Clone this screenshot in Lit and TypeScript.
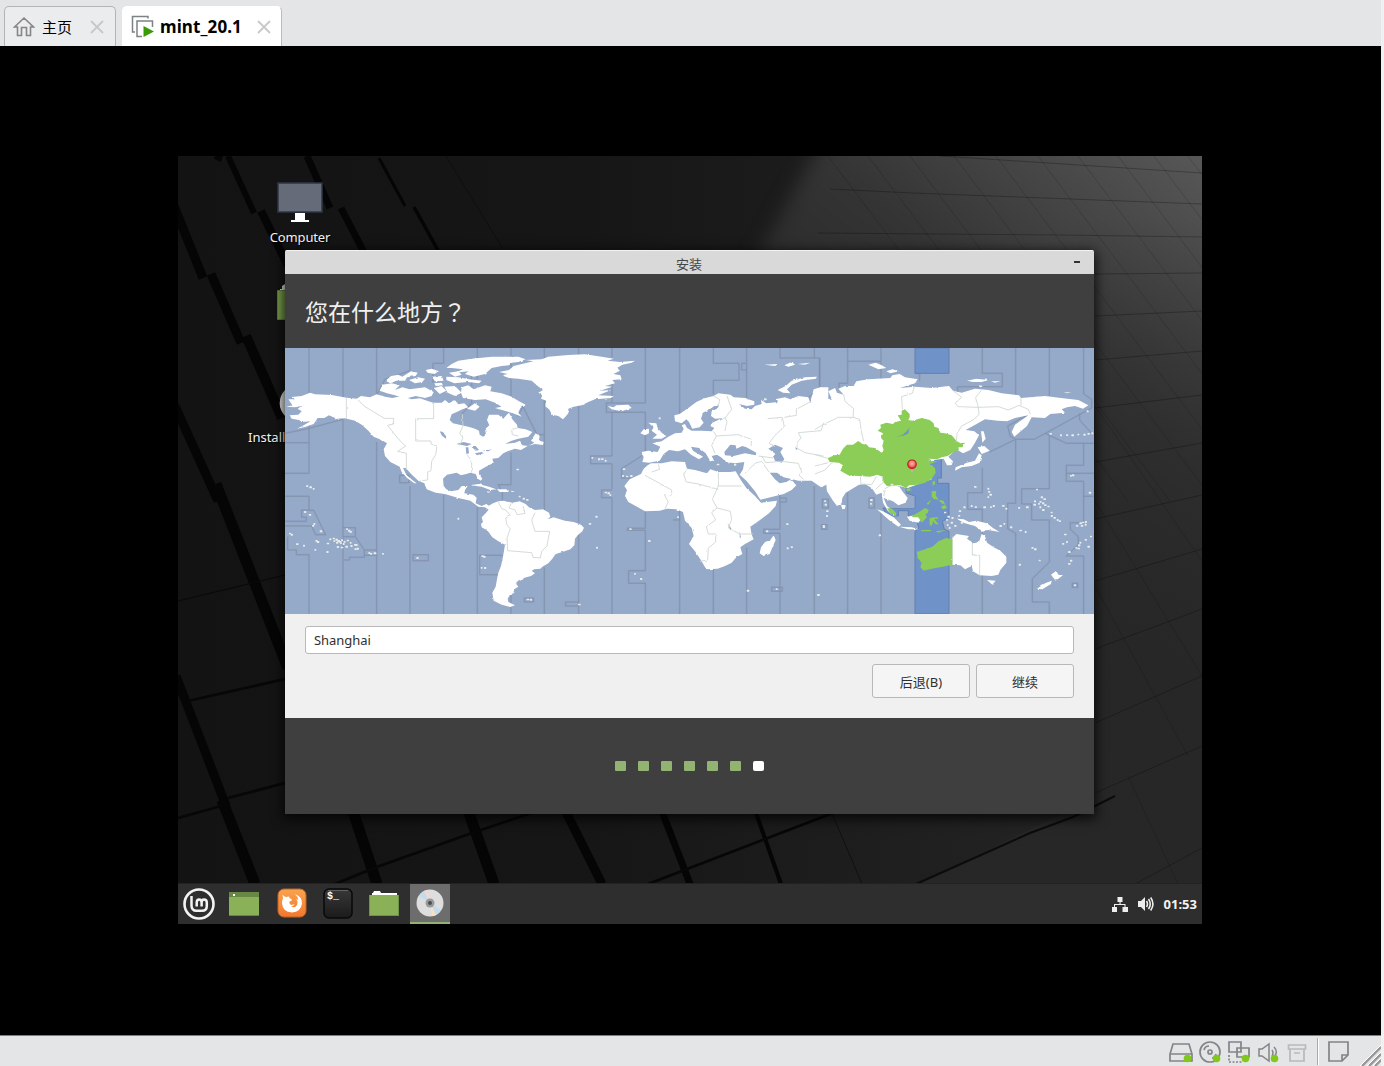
import { LitElement, html, css, svg } from "lit";
import { customElement } from "lit/decorators.js";

// Map geometry is kept at three units per pixel, in three sheets from west to east.
const WEST_LAND = [
  // North America
  "M4,182 L22,178 10,160 30,160 22,153 50,150 75,140 90,145 140,147 185,155 215,158 228,150 255,154 275,145 300,152 322,156 350,150 380,160 405,157 428,165 445,170 470,170 480,162 492,172 510,163 520,175 538,172 550,184 532,190 520,196 500,205 494,222 504,232 530,238 550,242 570,248 582,254 584,266 594,272 603,266 600,250 613,238 606,222 612,206 640,206 655,218 664,208 672,200 682,220 696,236 698,246 722,250 742,258 730,272 700,278 680,284 660,294 690,290 705,284 712,298 730,300 748,290 738,284 752,262 764,270 762,282 776,288 774,297 750,294 728,300 708,312 690,308 668,316 655,322 640,336 622,338 626,350 600,364 582,374 582,384 592,398 588,404 578,398 572,384 556,380 544,384 528,388 515,380 486,386 474,398 476,420 484,430 498,436 520,432 530,420 548,420 540,432 538,442 565,446 575,455 572,472 590,480 604,474 616,482 612,492 600,484 580,482 556,464 520,456 480,444 452,440 425,430 418,412 400,404 382,388 362,366 354,366 364,386 382,402 395,412 388,412 366,396 350,378 344,362 316,348 300,330 296,310 306,292 290,282 266,272 250,254 230,236 210,224 180,217 155,218 132,208 118,216 98,216 86,234 62,242 36,248 56,238 76,226 50,228 42,222 20,218 14,208 40,206 50,196 38,188 50,180 30,184Z",
  // South America
  "M610,480 L624,472 640,466 654,464 682,470 704,466 722,474 732,484 750,492 774,490 792,500 796,512 788,520 806,514 820,518 840,524 866,528 888,536 897,545 892,556 878,568 870,578 868,598 856,610 832,618 812,624 802,638 790,652 772,662 766,668 748,670 740,674 750,682 738,690 716,696 712,706 702,702 692,712 700,722 684,732 688,740 674,748 668,758 670,768 690,778 676,783 650,776 626,764 622,740 632,722 636,700 640,680 648,660 654,632 660,596 640,586 622,574 608,554 590,544 588,534 594,528 590,514 602,502 612,490Z",
  // Greenland
  "M642,78 L672,72 686,60 720,52 745,46 722,42 770,40 790,32 850,27 900,25 950,32 986,38 968,44 1005,48 1050,44 1040,50 1012,56 996,66 1005,74 985,84 1006,88 1010,100 982,102 990,112 960,120 982,122 945,134 978,132 940,148 986,150 978,156 930,160 910,168 890,178 866,182 850,188 850,202 840,214 834,220 820,210 802,206 792,190 780,180 784,164 768,158 772,148 760,140 774,132 758,120 740,104 700,98 672,96 650,88 668,84Z",
  // Arctic islands
  "M318,90 L340,86 352,92 378,76 398,80 392,90 366,94 360,104 334,104 316,112 302,104Z",
  "M284,134 L292,116 320,112 344,118 330,132 352,124 374,130 420,124 446,138 440,150 420,156 392,150 360,158 330,148 306,142Z",
  "M372,102 L400,94 420,98 412,108 390,112Z M422,72 L440,68 462,76 448,84 428,80Z M440,92 L470,90 476,104 450,106Z M446,126 L470,120 484,134 464,144Z M448,112 L470,110 474,118 452,120Z",
  "M484,92 L520,94 552,100 590,104 582,112 548,108 508,112 484,102Z",
  "M484,66 L500,54 520,44 560,38 620,32 700,32 722,40 700,48 680,50 672,58 650,60 620,66 600,84 566,92 540,84 550,76 510,80 534,70 500,66Z",
  "M492,80 L520,76 530,86 510,92Z M478,122 L510,120 530,140 510,150 488,140Z",
  "M530,124 L550,118 566,130 600,118 620,122 616,136 650,142 680,152 702,166 722,176 706,186 700,200 710,212 690,204 664,196 630,186 650,182 630,170 602,160 570,162 534,156 528,140Z M546,188 L570,172 584,182 570,194Z",
  "M558,418 L580,414 612,422 634,430 616,432 590,422Z M636,430 L664,430 672,438 644,438Z M606,436 L618,438 608,440Z M678,434 L690,436 680,438Z",
];
const WEST_WATER = [
  "M464,256 L474,258 484,272 482,278 470,268Z",
  "M514,294 L536,288 560,294 546,300Z M542,304 L550,304 552,322 544,324Z M556,300 L572,300 582,312 572,314 566,308Z M570,322 L590,318 596,322 576,328Z M592,314 L620,310 610,316Z",
];
const MID_LAND = [
  // Europe and western Asia
  "M292,348 L296,334 290,318 310,314 338,318 346,302 322,292 350,286 370,272 390,262 410,260 416,248 410,238 420,234 426,246 440,254 470,254 500,256 508,246 496,240 502,230 524,220 542,216 510,218 498,210 500,196 516,188 522,180 508,180 494,190 474,200 468,218 476,230 464,244 442,248 432,228 424,220 410,232 390,226 388,208 404,204 430,186 454,168 480,156 506,150 520,142 556,146 566,154 600,156 628,166 628,176 606,180 582,174 600,188 620,190 630,180 650,174 648,162 664,172 700,168 690,160 720,154 736,160 760,150 790,154 796,170 814,160 812,138 826,124 850,124 850,408 830,414 806,404 760,404 742,400 716,394 696,380 674,380 690,400 704,412 724,408 738,400 754,418 740,432 716,444 646,461 630,436 604,404 584,386 594,370 598,348 570,352 544,348 528,334 516,326 500,330 508,346 494,342 482,322 462,306 438,302 444,314 474,332 462,340 438,326 420,310 400,316 372,312 356,324 344,344 312,350Z",
  // Africa
  "M308,358 L318,352 350,352 380,346 420,348 426,368 450,372 486,382 496,370 520,378 556,378 572,376 586,400 604,426 630,450 648,470 696,464 692,480 672,502 642,524 616,542 620,566 626,580 600,594 586,604 592,624 574,634 560,650 540,660 518,668 484,670 466,640 450,616 432,594 446,570 440,546 420,524 414,498 394,490 366,488 344,494 300,496 276,482 250,468 240,450 246,432 238,420 254,400 288,384 296,368Z",
  "M686,568 L692,582 684,600 674,624 656,630 644,622 648,604 660,588 676,582Z",
  "M310,230 L334,232 338,246 350,260 364,270 350,278 322,278 336,266 320,254 326,244Z M286,262 L296,250 312,248 312,262 300,268Z",
  "M188,180 L206,184 214,178 250,176 260,186 230,196 200,190Z",
  "M698,132 L722,120 740,104 780,94 816,92 812,98 770,104 740,116 726,130 736,142 714,140Z",
  "M658,56 L700,54 690,60Z M718,58 L740,48 750,56 730,62Z M758,54 L796,50 780,56Z",
];
const MID_WATER = [
  "M538,318 L556,296 572,298 574,308 592,300 604,304 634,320 632,328 600,322 566,330 540,328Z",
  "M670,308 L690,296 714,306 706,318 718,340 710,350 690,344 684,330 692,324Z",
  "M750,304 L758,308 754,312Z M548,532 L562,552 556,552Z M584,556 L588,576 584,574Z",
];
const EAST_LAND = [
  // Asia
  "M-12,160 L-4,130 16,124 30,130 34,160 50,158 40,136 60,126 66,140 86,146 70,128 90,120 116,120 124,106 160,100 226,96 232,88 254,84 270,94 308,100 300,112 254,126 300,122 350,126 402,120 414,134 440,140 480,128 520,132 560,142 612,148 618,156 690,150 738,156 790,162 820,178 804,188 780,180 756,184 740,190 750,200 706,204 690,216 650,214 636,240 598,272 590,258 600,236 640,208 600,216 576,226 548,224 510,220 474,240 452,252 478,256 492,268 480,290 466,312 444,322 424,310 400,332 414,346 410,358 396,358 386,338 340,344 350,400 278,426 252,420 262,436 278,456 272,470 250,478 234,466 206,456 216,480 240,500 236,510 218,494 204,470 200,440 184,446 170,426 150,414 132,416 92,440 82,456 80,472 66,480 54,464 36,436 34,416 18,424 -10,404Z",
  "M498,256 L506,256 512,278 502,290Z M488,304 L508,300 524,314 500,324Z M492,322 L500,328 494,350 470,360 440,364 420,374 422,364 456,350 480,344Z",
  "M78,476 L92,478 90,488 82,490Z M186,490 L204,496 236,514 258,536 250,542 222,522Z M252,542 L290,544 312,550 280,550Z",
  "M276,512 L298,508 320,518 310,530 284,524Z M424,518 L446,520 462,528 484,524 516,532 534,546 554,558 520,552 500,554 480,540 450,532Z",
  // Australia and New Zealand
  "M412,576 L424,564 462,570 456,578 476,592 492,588 500,564 510,570 516,590 536,604 556,614 574,632 574,650 556,672 550,686 530,690 494,688 474,676 470,660 450,670 436,658 412,656Z",
  "M516,702 L542,704 532,716Z M708,686 L724,674 730,686 744,688 722,704Z M666,728 L690,712 710,704 708,714 682,730Z",
  "M160,56 L182,50 200,58 214,66 190,70Z M214,76 L232,70 252,76 226,82Z M456,104 L484,98 520,102 500,108 474,108Z M528,106 L556,106 540,110Z M488,118 L506,120 496,124Z M746,140 L770,138 756,142Z",
];
const EAST_GREEN = [
  "M38,337 L58,328 74,326 84,308 96,296 114,296 130,285 142,294 156,296 162,304 180,306 200,320 206,312 202,300 206,284 198,276 204,262 188,254 198,246 196,236 214,230 234,234 240,228 258,224 248,208 260,206 260,194 270,190 284,204 284,214 280,222 292,224 320,216 344,222 356,232 358,242 370,246 376,260 390,262 410,268 424,284 436,292 450,290 442,304 430,304 432,312 416,318 398,330 380,334 366,340 340,338 350,342 336,346 368,346 346,354 360,366 362,380 350,398 330,410 308,416 282,418 274,426 256,418 216,420 208,412 202,404 204,392 186,386 168,392 130,390 100,388 76,374 84,358 72,350 44,348Z",
  "M216,486 L232,488 244,502 240,510 226,504Z M290,510 L312,498 330,486 342,492 332,506 336,514 320,530 310,514 294,514Z",
  "M352,408 L360,404 360,414 354,420Z M274,428 L286,426 286,434 276,436Z M350,436 L364,434 362,448 370,460 356,460 350,450Z M364,460 L386,464 390,476 376,468Z M378,482 L390,476 396,486 384,490Z M334,474 L350,460 340,476Z",
  "M344,516 L372,512 358,520 370,534 362,536 354,524 350,540 344,536Z M318,552 L350,552 346,556 320,556Z M362,556 L394,552 370,560Z",
  "M306,618 L330,610 352,602 370,586 394,576 412,580 412,656 384,662 350,668 326,674 316,664 320,650 308,636Z",
];

const WEST_ZONES =
  "M72,6V290H0M0,382H72V290M0,451H72V492H50V514H64V526H0M72,493H86L122,566H92L80,540H0M8,572V612H34V626H72V804M174,6V157M174,220V804M174,545H211V572H174M211,572L238,612V634H194V642H174M238,612H275M238,628H275M275,6V148L300,100 375,74M275,288V804M375,6V74M375,420V804M476,6V52H444V110M476,448V804M577,6V100M577,484V804M584,628H652M584,628V686H640M678,6V180M678,320V416H640L652,440V464M678,684V804M778,6V38M778,150V492M778,664V804M344,388H372V410H344ZM384,626H430V644H384ZM718,756H746V768H718ZM0,262L60,250 174,220M560,36V170L530,205M698,212L714,182 756,266H778";
const MID_ZONES =
  "M101,6V26M101,166V530M101,552V804M201,6V34M201,64V170M201,200V330M201,353V430M201,455V804M301,6V171H184V199H301V316M301,496V547H247V553H301V674H251V712H301V804M201,330H137V353H201M201,432H170V455H201M290,330L230,368V396H256M404,6V202M404,492V804M385,522H404M505,6V52H582V103H505V145M505,670V804M605,6V50M590,52H605V72H590V52M605,72V156M605,605V804M705,6V36H824V124L790,155M705,445V550H656V562H705V804M705,456H724V468H705M680,724H712V736H680ZM808,6V36M808,420V804M101,768H62V780H101";
const EAST_ZONES =
  "M98,6V46H198V6M98,46V112H72V128M98,440V804M198,46V98M198,500V804M14,36V124M300,82L314,84V104M502,6V82H562V122H428V138M502,365V440H458V490H502V804M602,6V147M602,280V472H578V548L602,562V804M703,6V150M703,262V428H620V474H650V522H703V648L652,698V768H703V804M806,6V144L830,160V186L658,280H602L524,318M794,202V222L830,262M690,262L754,292H836M806,292V358H754V406H806V530H766V550L790,572V596L754,630H806V804M754,382H836M806,451H836M772,712H788V724H772ZM20,536H36V550H20ZM162,456H178V486H162ZM22,460H40V486H22ZM640,206L578,240 586,272 602,280";

const WEST_BORDERS =
  "M184,155V218M215,158L240,182 298,217H326V234L308,238 325,260 350,290 362,300 338,316 364,322V372M446,170V218H392V285H438V294L456,300 452,326 440,346 438,374 428,378V402L412,404M532,204L534,240 524,262 534,276 524,298M546,326L560,346V380M698,246L680,250 682,266 700,270M640,468L650,488 662,492 676,508 662,516 666,538 676,548 666,576 668,614 740,620 744,634 766,636 770,616 786,600 794,556H750L740,522 750,500M680,470L672,486 690,492 696,506 720,502 714,480";
const MID_BORDERS =
  "M300,388L380,432V446H358L370,468 360,488M340,355L344,370 320,378M426,368L416,386 424,408 460,414 520,430M520,380V420H590M520,420L502,460 516,486 556,496 560,520 550,546 584,564M516,486L500,500 512,522 484,542 490,564H512V588L490,606 488,642 464,646M584,564H624M505,256L514,270 580,266 620,280 618,300M514,270L500,298 510,322M540,255L546,226 538,214M505,150L524,160 520,182M546,150L560,190 540,216M668,218L712,214 718,242 690,268 672,292 690,302M800,165L754,190V208L718,214M836,230L828,254 760,260 768,276 756,290V306L780,320 836,330M640,330L684,336M600,382L630,352 650,346 672,378M650,330L662,350 708,346 760,352 770,378 762,388 776,400";
const EAST_BORDERS =
  "M86,146L90,166 116,188 114,214 134,220 138,250 146,286M114,214H70L20,238 0,250M298,122L292,142 260,152 262,190M414,134L440,154 420,172 430,182 490,184 492,206 474,222 440,240 426,262 424,288M500,132L482,154 490,184 550,182 580,192 612,178 640,190 646,204M618,156V178M0,326L38,337M0,360L40,350M0,384L30,372 50,350M136,392L138,414 170,416 184,392M200,392L206,408 182,430M206,450L212,426 232,418M472,590V628H494V688";

type Speck = [number, number];
const WEST_SPECKS: Speck[] = [[86,429],[60,498],[74,507],[88,534],[84,540],[107,556],[15,563],[20,566],[36,595],[57,599],[94,585],[98,588],[91,612],[127,618],[128,593],[136,580],[146,578],[154,581],[148,586],[156,590],[164,588],[171,583],[178,588],[160,585],[168,592],[158,603],[170,605],[176,594],[188,584],[184,602],[197,591],[199,600],[210,597],[215,597],[211,610],[217,608],[186,550],[192,554],[196,558],[253,621],[258,624],[269,622],[294,624],[397,636],[697,371],[520,518],[592,631],[597,632],[590,666],[600,666],[728,761],[738,761],[66,421],[76,424],[704,452],[716,458],[726,462]];
const MID_SPECKS: Speck[] = [[142,336],[162,340],[171,340],[182,344],[182,440],[190,442],[196,448],[154,512],[134,534],[156,605],[256,550],[312,585],[270,684],[288,699],[236,370],[234,390],[246,392],[258,390],[399,514],[666,556],[726,535],[728,607],[740,604],[608,734],[695,730],[820,747],[102,776],[344,217],[836,540],[660,160],[552,350],[570,356],[518,356]];
const EAST_SPECKS: Speck[] = [[30,466],[32,476],[36,496],[36,510],[26,544],[168,462],[168,474],[194,568],[480,423],[520,428],[522,438],[526,446],[520,454],[448,484],[434,496],[470,480],[482,484],[508,484],[528,484],[536,480],[564,480],[574,488],[612,486],[636,484],[666,431],[680,454],[688,460],[660,466],[676,468],[658,476],[672,474],[684,472],[690,478],[676,484],[700,482],[684,492],[710,500],[710,510],[718,516],[728,522],[734,526],[796,532],[804,530],[812,528],[800,540],[812,536],[786,540],[556,540],[568,534],[588,544],[616,554],[632,558],[652,606],[660,610],[674,644],[614,656],[750,566],[756,588],[744,594],[762,618],[784,606],[792,598],[790,608],[796,590],[812,582],[820,602],[828,572],[768,644],[762,654],[780,718],[10,747],[824,440],[768,390],[774,388],[706,264],[738,268],[756,268],[772,268],[790,266],[808,266],[820,264],[832,262],[390,500],[400,512],[396,522],[410,530],[420,540],[404,546],[432,510],[440,530],[398,538],[412,516],[230,416],[818,196]];

const specks = (list: Speck[]) =>
  list.map(([x, y], i) => svg`<rect x=${x - 3} y=${y - 3} width=${6 + (i % 3)} height=${5 + (i % 2)} rx="2"/>`);

const paths = (list: string[]) => list.map((d) => svg`<path d=${d}/>`);

const sheet = (x: number, zones: string) => svg`
  <g transform="translate(${x} -2) scale(.33333)" fill="none">
    <path d=${zones} stroke="#8292ae" stroke-opacity=".2" stroke-width="6"/>
    <path d=${zones} stroke="#7f8ea8" stroke-width="2.3"/>
  </g>`;

const worldMap = html`<svg class="map" viewBox="0 0 809 266">
  <defs>
    <filter id="coast" x="0" y="0" width="100%" height="100%" color-interpolation-filters="sRGB">
      <feTurbulence type="fractalNoise" baseFrequency=".2" numOctaves="2" seed="4" result="n"/>
      <feDisplacementMap in="SourceGraphic" in2="n" scale="2" xChannelSelector="R" yChannelSelector="G"/>
      <feGaussianBlur stdDeviation=".3"/>
    </filter>
    <radialGradient id="pin" cx=".5" cy=".4"><stop offset="0" stop-color="#ffb5b0"/><stop offset=".7" stop-color="#f0706c"/><stop offset="1" stop-color="#d03030"/></radialGradient>
  </defs>
  <rect width="809" height="266" fill="#95a9c9"/>
  ${sheet(0, WEST_ZONES)}${sheet(260, MID_ZONES)}${sheet(530, EAST_ZONES)}
  <g transform="translate(530 -2) scale(.33333)" fill="#6f92c8" stroke="#6280b0" stroke-width="3">
    <path d="M300,6H402V82H300Z"/>
    <path d="M340,335H379V396H368V412H402V516L382,526 388,550 402,556V804H300V556L312,546 300,510H280V494H250V510H216L204,486H300V450L272,440V420Z"/>
    <path d="M208,448L272,420V446L298,452V486H214Z" fill="#95a9c9" stroke="none"/>
  </g>
  <g filter="url(#coast)" stroke-width="1">
    <g transform="translate(0 -2) scale(.33333)" fill="#fff">
      ${paths(WEST_LAND)}<g fill="#95a9c9">${paths(WEST_WATER)}</g>
    </g>
    <g transform="translate(260 -2) scale(.33333)" fill="#fff">
      ${paths(MID_LAND)}<g fill="#95a9c9">${paths(MID_WATER)}</g>
    </g>
    <g transform="translate(530 -2) scale(.33333)" fill="#fff">
      ${paths(EAST_LAND)}<g fill="#8bcd57">${paths(EAST_GREEN)}</g>
      <path d="M242,272Q270,268 283,245L280,262Q266,272 242,272Z" fill="#6f92c8"/>
    </g>
    <g fill="none" stroke="#cdd6d1" stroke-width="2.6">
      <path transform="translate(0 -2) scale(.33333)" d=${WEST_BORDERS}/>
      <path transform="translate(260 -2) scale(.33333)" d=${MID_BORDERS}/>
      <path transform="translate(530 -2) scale(.33333)" d=${EAST_BORDERS}/>
    </g>
  </g>
  <g fill="#e9eeec">
    <g transform="translate(0 -2) scale(.33333)">${specks(WEST_SPECKS)}</g>
    <g transform="translate(260 -2) scale(.33333)">${specks(MID_SPECKS)}</g>
    <g transform="translate(530 -2) scale(.33333)">${specks(EAST_SPECKS)}</g>
  </g>
  <path d="M626 120h2v4.500h-2z" fill="#b5b8a8"/>
  <circle cx="627" cy="116.300" r="4.300" fill="url(#pin)" stroke="#c42020" stroke-width="1.100"/>
</svg>`;

const KEY_GAPS: [string, number][] = [
  ["M37 0L44 3M50 0L76 57", 6], ["M-4 50L25 122", 9], ["M83 55L111 112", 8], ["M129 0L152 52", 7],
  ["M163 52L190 104", 7], ["M201 2L227 50", 3], ["M236 51L262 98", 3.5], ["M33 118L63 187", 9],
  ["M68 180L104 262", 10], ["M-3 250L40 345", 9], ["M38 328L110 512", 11], ["M-2 520L48 650", 9],
  ["M44 644L77 728", 11], ["M170 640L199 728", 11], ["M285 640L316 728", 11], ["M380 640L424 728", 9],
  ["M478 640L512 728", 7], ["M572 640L603 728", 4],
];
const KEY_SEAMS =
  "M10 545L107 523M50 642L107 627M0 662L43 650M157 728L196 712L294 677L359 655M470 728L582 685L660 655";
const TILE_ROWS =
  "M762 0L1024 17M652 33L735 37L1024 48M640 77L880 79L1024 81M917 118L1024 117M917 160L1024 155M917 204L1024 195M917 252L1024 239M917 306L1024 287M917 363L1024 339M917 425L1024 393M917 493L1024 453M917 567L1024 520M917 637L1024 590M957 728L1024 692";

const wallpaper = html`<svg class="wallpaper" viewBox="0 0 1024 768">
  <defs>
    <linearGradient id="base" x1="0" y1=".5" x2="1" y2=".5"><stop offset="0" stop-color="#131313"/><stop offset=".4" stop-color="#161616"/><stop offset=".75" stop-color="#202020"/><stop offset="1" stop-color="#272727"/></linearGradient>
    <linearGradient id="sheen" gradientUnits="userSpaceOnUse" x1="740" y1="330" x2="1010" y2="-10"><stop offset="0" stop-color="#262626"/><stop offset=".45" stop-color="#343434"/><stop offset="1" stop-color="#575757"/></linearGradient>
    <linearGradient id="fall" x1="0" y1="0" x2="0" y2="1"><stop offset="0" stop-color="#272727" stop-opacity="0"/><stop offset=".7" stop-color="#272727" stop-opacity=".9"/><stop offset="1" stop-color="#272727"/></linearGradient>
    <filter id="soft" color-interpolation-filters="sRGB"><feGaussianBlur stdDeviation="9"/></filter>
    <filter id="edge" x="0" y="0" width="1024" height="768" filterUnits="userSpaceOnUse" color-interpolation-filters="sRGB"><feGaussianBlur stdDeviation=".7"/></filter>
  </defs>
  <rect width="1024" height="768" fill="url(#base)"/>
  <path d="M652 -30H1060V600L520 300L580 100Z" fill="url(#sheen)" filter="url(#soft)"/>
  <path d="M900 60H1024V768H660L900 650Z" fill="url(#fall)"/>
  <g stroke="#050505" fill="none" filter="url(#edge)">
    ${KEY_GAPS.map(([d, w]) => svg`<path d=${d} stroke-width=${w}/>`)}
    <path d=${KEY_SEAMS} stroke="#070707" stroke-width="2.8"/>
    <path d="M0 445L107 419" stroke="#0a0a0a" stroke-width="1.2"/>
    <path d="M738 728L803 699L852 677L895 661L937 640" stroke="#0c0c0c" stroke-width="2"/>
    <path d="M268 0L325 93M653 655L684 728" stroke="#0e0e0e" stroke-width=".8"/>
  </g>
  <path d=${TILE_ROWS} stroke="#000" stroke-opacity=".26" fill="none"/>
  <g stroke="#000" stroke-opacity=".14" fill="none">
    ${[650, 690, 732, 776, 818, 860, 900, 940, 976, 1010].map((x) => svg`<path d="M${x} 0L${x + 260} 345"/>`)}
    <path d="M917 345L1024 520M917 430L1010 600M950 620L1000 728M917 250L1024 405"/>
  </g>
</svg>`;

const disc = html`<svg class="disc" viewBox="0 0 28 28">
  <circle cx="14" cy="14" r="13.500" fill="#dedede"/>
  <path d="M14 14L3 7A13.500 13.500 0 0 1 8 2Z" fill="#c3dcec"/><path d="M14 14L8 2A13.500 13.500 0 0 1 12 1Z" fill="#f1d8d2"/>
  <path d="M14 14L20 26A13.500 13.500 0 0 0 25 21Z" fill="#c3dcec"/><path d="M14 14L16 27A13.500 13.500 0 0 0 20 26Z" fill="#f2e3c4"/>
  <circle cx="14" cy="14" r="4.500" fill="#999"/><circle cx="14" cy="14" r="2" fill="#4d4d4d"/>
</svg>`;

const closeX = html`<svg width="14" height="14" viewBox="0 0 14 14"><path d="M1 1L13 13M13 1L1 13" stroke="#c8c8c8" stroke-width="1.800"/></svg>`;

@customElement("app-root")
export class AppRoot extends LitElement {
  static styles = css`
    :host { display: block; width: 1384px; height: 1066px; overflow: hidden; font-family: "Noto Sans", "Noto Sans CJK SC", sans-serif; }
    * { box-sizing: border-box; }
    svg { display: block; flex: none; }
    .shell { display: flex; flex-direction: column; height: 1066px; background: #e4e5e7; border-right: 3px solid #f1f1f1; }
    .tabs { display: flex; height: 46px; padding: 6px 0 0 4px; gap: 6px; }
    .tab { display: flex; align-items: center; height: 40px; border: 1px solid #b4b4b5; border-bottom: 0; border-radius: 5px 5px 0 0; background: #ebecee; font-size: 16px; color: #000; }
    .home { width: 112px; padding: 0 11px 0 8px; font-family: "Noto Sans CJK SC", sans-serif; font-size: 15px; }
    .home span { margin: 0 auto 0 7px; }
    .vm { width: 160px; padding: 0 10px 0 8px; background: #fff; border-color: #fff #bbb #fff #fff; font-family: "Noto Sans", sans-serif; font-size: 17px; font-weight: 700; }
    .vm span { margin: 0 auto 0 6px; white-space: nowrap; letter-spacing: .1px; }
    .screen { flex: none; height: 989px; padding: 110px 0 0 178px; background: #000; }
    .desktop { position: relative; width: 1024px; height: 768px; overflow: hidden; display: flex; flex-direction: column; justify-content: flex-end; }
    .wallpaper { position: absolute; inset: 0; width: 1024px; height: 768px; }
    .item { position: absolute; font-size: 13px; line-height: 16px; color: #f2f2f2; text-shadow: 1px 1px 1px #000; white-space: nowrap; }
    .computer { left: 72px; top: 25px; width: 100px; display: flex; flex-direction: column; align-items: center; gap: 6px; letter-spacing: -.15px; }
    .folder { left: 99px; top: 127px; }
    .install { left: 70px; top: 273px; }
    .cd { left: 101px; top: 228px; }
    .cd svg { width: 38px; height: 38px; }
    .window { position: absolute; left: 107px; top: 94px; width: 809px; height: 564px; display: flex; flex-direction: column; background: #3f3f3f; border-radius: 2px 2px 0 0; box-shadow: 0 3px 12px 2px rgba(0,0,0,.75); }
    .title { height: 24px; display: grid; grid-template-columns: 28px 1fr 28px; text-align: center; background: #d9d9d9; border-top: 1px solid #f2f2f2; border-radius: 2px 2px 0 0; font-size: 13px; line-height: 20px; color: #454545; }
    .title .name { padding-top: 3px; padding-right: 1px; }
    .minus { width: 6px; height: 2px; margin: 10px 0 0 8px; background: #333; }
    .heading { height: 74px; padding: 19px 20px 0; font-family: "Noto Sans CJK SC", sans-serif; font-size: 23px; line-height: 36px; font-weight: 400; color: #f0f0f0; }
    .mark { font-family: "Noto Sans CJK TC", "Noto Sans CJK SC", sans-serif; }
    .map { width: 809px; height: 266px; }
    .form { height: 104px; padding: 12px 20px 20px; background: #f0f0f0; display: flex; flex-direction: column; gap: 10px; font-size: 13px; color: #2f2f2f; }
    .field { height: 28px; padding: 0 8px; line-height: 26px; border: 1px solid #b9b9b9; border-radius: 3px; background: #fff; letter-spacing: -.05px; }
    .buttons { display: flex; justify-content: flex-end; gap: 6px; }
    .button { width: 98px; height: 34px; line-height: 34px; text-align: center; border: 1px solid #b8b8b8; border-radius: 3px; background: #f5f5f5; }
    .steps { flex: 1; display: flex; align-items: center; justify-content: center; gap: 12px; }
    .step { width: 11px; height: 10px; background: #92b372; border-radius: 1px; }
    .step.now { background: #fff; border-radius: 2px; }
    .panel { position: relative; height: 41px; display: flex; align-items: center; background: #2e2e2e; border-top: 1px solid #222; }
    .slot { width: 46px; display: flex; justify-content: center; }
    .slot.files { padding-bottom: 2px; }
    .slot.fox { padding-bottom: 2px; margin-left: 2px; }
    .slot.shell-icon { padding-bottom: 1px; }
    .slot.show { margin-left: 6px; }
    .launch { display: flex; height: 40px; align-items: center; padding-left: 5px; }
    .current { width: 40px; height: 40px; margin-left: 3px; display: flex; align-items: center; justify-content: center; background: #6d6d6d; border-bottom: 2px solid #92b372; }
    .disc { width: 28px; height: 28px; }
    .tray { margin-left: auto; display: flex; align-items: center; gap: 10px; padding-right: 5px; font-size: 13px; font-weight: 700; color: #f3f3f3; }
    .status { flex: 1; display: flex; justify-content: flex-end; align-items: center; border-top: 1px solid #7e7e7e; }
  `;

  render() {
    return html`<div class="shell">
      <div class="tabs">
        <div class="tab home">
          <svg width="22" height="22" viewBox="0 0 22 22" fill="none" stroke="#858585" stroke-width="1.600"><path d="M1.500 11L11 2L20.500 11H17.500V19.500H13.500V11.500H8.500V19.500H4.500V11Z"/></svg>
          <span>主页</span>${closeX}
        </div>
        <div class="tab vm">
          <svg width="23" height="23" viewBox="0 0 23 23" fill="none" stroke="#7d8385" stroke-width="1.500"><path d="M17 3.500V1.500H1.500V17H4M11 21.500H6V6H21.500V12"/><path d="M12.500 11L23 16.500L12.500 22Z" fill="#3c9a08" stroke="none"/></svg>
          <span>mint_20.1</span>${closeX}
        </div>
      </div>
      <div class="screen"><div class="desktop">
        ${wallpaper}
        <div class="item computer">
          <svg width="48" height="42" viewBox="0 0 48 42"><rect x="2" y="2" width="44" height="29" fill="#666b7a" stroke="#303644" stroke-width="1.500"/><path d="M19 32H29V39H33V41H15V39H19Z" fill="#fff"/></svg>
          <span>Computer</span>
        </div>
        <div class="item folder"><svg width="30" height="38" viewBox="0 0 30 38"><path d="M3 12V6H5V3L8 1H30V12Z" fill="#ddd"/><path d="M.5 7.500H30V36.500H.5Z" fill="#769b49" stroke="#5d7d38"/></svg></div>
        <div class="item cd">${disc}</div>
        <div class="item install">Install Linux Mint</div>
        <div class="window">
          <div class="title"><span></span><span class="name">安装</span><span class="minus"></span></div>
          <div class="heading">您在什么地方<span class="mark" lang="zh-TW">？</span></div>
          ${worldMap}
          <div class="form">
            <div class="field">Shanghai</div>
            <div class="buttons"><div class="button">后退(B)</div><div class="button">继续</div></div>
          </div>
          <div class="steps">${[0, 1, 2, 3, 4, 5, 6].map((i) => html`<span class="step ${i === 6 ? "now" : ""}"></span>`)}</div>
        </div>
        <div class="panel">
          <div class="launch">
            <svg width="32" height="32" viewBox="0 0 32 32" fill="none" stroke="#f3f3f3"><circle cx="16" cy="16" r="14.500" stroke-width="2.600"/><path d="M8.500 8V17.500Q8.500 22.800 13.500 22.800H19Q23.800 22.800 23.800 18V14.500Q23.800 11.500 21 11.500Q18.600 11.500 18.600 14.500V18.500M18.600 14.500Q18.600 11.500 16.200 11.500Q13.700 11.500 13.700 14.500V18.500" stroke-width="2.500"/></svg>
          </div>
          <div class="slot show"><svg width="30" height="24" viewBox="0 0 30 24"><path fill="#8ab058" d="M0 0H30V24H0Z"/><path fill="#688744" d="M0 0H30V5H0ZM0 23H30V24H0Z"/><path fill="#fff" d="M4 2H6V4H4Z"/></svg></div>
          <div class="slot fox"><svg width="30" height="30" viewBox="0 0 30 30"><defs><linearGradient id="ff" x2="0" y2="1"><stop stop-color="#f9a34d"/><stop offset="1" stop-color="#f4772c"/></linearGradient></defs><rect x="1" y="1" width="28" height="28" rx="6" fill="url(#ff)" stroke="#bd622a"/><path d="M5.500 6.500Q7 8.500 9 9L12 8.500Q12 10.500 15 11.500Q15 13 12.500 13.500Q12 16 14.500 17L17.500 16Q16.500 18.500 14 18.500Q18 20.500 20 17Q21.500 13.500 19 11L21.500 12Q20.500 8.500 18 6Q25.500 9 25 15.500Q24 24 15 24.500Q5.500 24 5 15Q5 12 6 10.500Z" fill="#fff"/></svg></div>
          <div class="slot shell-icon"><svg width="30" height="31" viewBox="0 0 30 31"><defs><linearGradient id="term" x2="0" y2="1"><stop stop-color="#383838"/><stop offset="1" stop-color="#1b1b1b"/></linearGradient></defs><rect x="1" y="1" width="28" height="29" rx="5" fill="url(#term)" stroke="#090909" stroke-width="1.500"/><path d="M5 2.500H25" stroke="#626262"/><text x="4" y="10.500" fill="#fff" font-family="Liberation Mono" font-size="10" font-weight="700">$_</text></svg></div>
          <div class="slot files"><svg width="30" height="25" viewBox="0 0 30 25"><path d="M3 7V2H4L5 0H11L12 2H28V7Z" fill="#fff"/><rect y="4" width="30" height="21" rx="1" fill="#8ab058"/><path d="M1 24.500H29M.5 5V24M29.500 5V24" stroke="#6f914a"/></svg></div>
          <div class="current">${disc}</div>
          <div class="tray">
            <svg width="16" height="16" viewBox="0 0 16 16" fill="#eee"><path d="M5.500 1H10.500V6H8.600V8H13.500V11H16V16H10.500V11H12.500V9H3V11H5V16H0V11H2V8H7.500V6H5.500Z"/></svg>
            <svg width="16" height="16" viewBox="0 0 16 16"><path d="M0 5H3L7 1V15L3 11H0Z" fill="#eee"/><path d="M8.500 5Q10.500 8 8.500 11M10.500 3Q14 8 10.500 13M12.700 1.500Q17.200 8 12.700 14.500" fill="none" stroke="#eee" stroke-width="1.600"/></svg>
            <span>01:53</span>
          </div>
        </div>
      </div></div>
      <div class="status">
        <svg width="213" height="30" viewBox="0 0 213 30" fill="none" stroke="#838486" stroke-width="1.700">
          <path d="M5 8H21L24 18V25H2V18ZM2 18H24"/>
          <circle cx="42" cy="16" r="10"/><circle cx="42" cy="16" r="2"/><path d="M36 14Q37 10 41 10M48 18Q47 22 44 22"/>
          <path d="M61 6H73V16H61ZM69 12H81V21H69Z" fill="#e4e5e7"/><path d="M61 19V26H74" stroke-dasharray="2 1.500"/>
          <path d="M91 13H94L101 8V25L94 20H91ZM104 14Q106 17 104 20M106 11Q110 15 107 20" stroke-width="1.500"/>
          <g stroke="#b8b9bb"><path d="M120.500 9H137.500V13H120.500ZM122 13V25H136V13M126 17H132"/></g>
          <path d="M149.500 2V29" stroke="#aaa" stroke-width="1"/><path d="M150.500 2V29" stroke="#fff" stroke-width="1"/>
          <path d="M161 6H180V19L174 25H161ZM180 19H174V25"/>
          <path d="M194 30L213 11M201 30L213 18M207 30L213 24" stroke="#999" stroke-width="2.500"/><path d="M192 30L213 9M199 30L213 16M205 30L213 22" stroke="#fff" stroke-width="1"/>
          <g fill="#80c918" stroke="none"><circle cx="19.500" cy="22.500" r="3.800"/><circle cx="48.500" cy="22.500" r="3.800"/><circle cx="77.500" cy="22.500" r="3.800"/><circle cx="106.500" cy="22.500" r="3.800"/></g>
        </svg>
      </div>
    </div>`;
  }
}
